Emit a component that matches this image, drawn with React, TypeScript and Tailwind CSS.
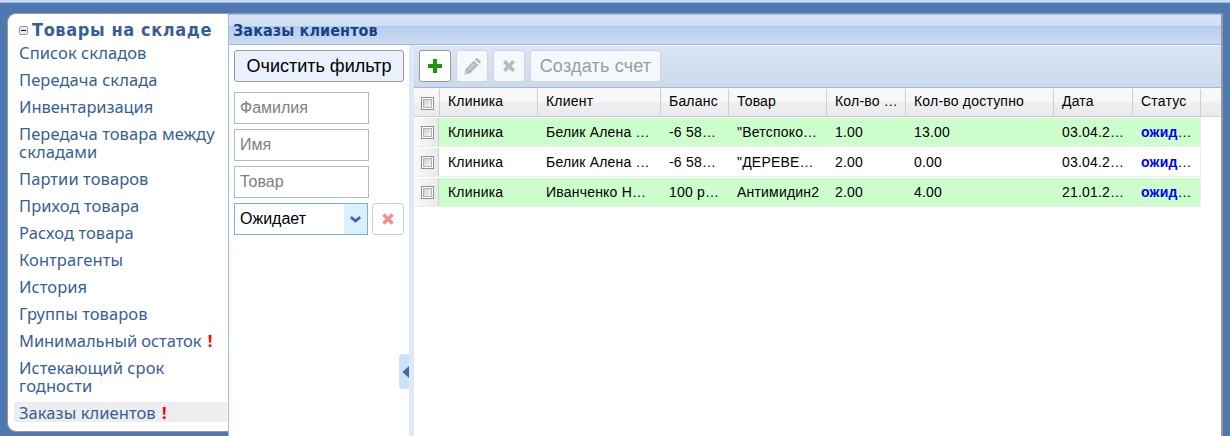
import React from 'react';

type MenuItem = { label: string; alert?: boolean; active?: boolean; tight?: boolean };

const menu: MenuItem[] = [
  { label: 'Список складов' },
  { label: 'Передача склада' },
  { label: 'Инвентаризация', tight: true },
  { label: 'Передача товара между\nскладами' },
  { label: 'Партии товаров' },
  { label: 'Приход товара' },
  { label: 'Расход товара' },
  { label: 'Контрагенты' },
  { label: 'История' },
  { label: 'Группы товаров' },
  { label: 'Минимальный остаток', alert: true, tight: true },
  { label: 'Истекающий срок\nгодности' },
  { label: 'Заказы клиентов', alert: true, active: true },
];

const columns = ['Клиника', 'Клиент', 'Баланс', 'Товар', 'Кол-во …', 'Кол-во доступно', 'Дата', 'Статус'];
const rows = [
  ['Клиника', 'Белик Алена …', '-6 58…', '"Ветспоко…', '1.00', '13.00', '03.04.2…', 'ожид'],
  ['Клиника', 'Белик Алена …', '-6 58…', '"ДЕРЕВЕ…', '2.00', '0.00', '03.04.2…', 'ожид'],
  ['Клиника', 'Иванченко Н…', '100 р…', 'Антимидин2', '2.00', '4.00', '21.01.2…', 'ожид'],
];

function Check() {
  return (
    <span className="block size-[13px] border border-[#8e8f8f] bg-white p-px">
      <span className="block size-[9px] border border-[#aeb3b9] bg-linear-to-br from-[#cbcfd5] to-[#f6f6f6]" />
    </span>
  );
}

function Sidebar() {
  return (
    <nav className="h-[419px] w-[221px] shrink-0 rounded-l-[9px] border border-r-0 border-[#999] bg-white pl-[6px] pt-[4px] font-['Noto_Sans',sans-serif] text-[#385f95]">
      <div className="flex h-[24px] items-center pl-[5px]">
        <svg width="9" height="9" viewBox="0 0 9 9" className="mr-[4px] shrink-0">
          <rect x=".5" y=".5" width="8" height="8" rx="1" fill="#e9edf2" stroke="#7f9db9" />
          <path d="M2 4.5h5" stroke="#111" />
        </svg>
        <span className="whitespace-nowrap font-['DejaVu_Sans_Condensed','DejaVu_Sans',sans-serif] text-[18px] font-bold leading-[22px] tracking-[0.6px] [font-stretch:condensed]">Товары на складе</span>
      </div>
      <ul>
        {menu.map((m) => (
          <li
            key={m.label}
            className={`mb-[7px] w-[213px] whitespace-pre pl-[5px] pt-[2px] text-[16.5px] leading-[18px] ${m.tight ? 'tracking-[-0.08px]' : 'tracking-[0.07px]'} ${m.active ? 'bg-[#ebedef]' : ''}`}
          >
            {m.label}
            {m.alert && <b className="ml-[2px] text-[#f00]"> !</b>}
          </li>
        ))}
      </ul>
    </nav>
  );
}

function Field({ placeholder }: { placeholder: string }) {
  return (
    <input
      placeholder={placeholder}
      className="mb-[5px] block h-8 w-[135px] border border-[#b5b8c8] bg-white px-[5px] text-[16px] outline-none placeholder:text-[#808080]"
    />
  );
}

function Filters() {
  return (
    <aside className="flex w-[180px] shrink-0">
      <div className="ml-[5px] w-[170px] shrink-0 pt-[5px]">
        <button className="mb-[10px] block h-8 w-[170px] whitespace-nowrap rounded-[3px] border border-[#999] bg-[#e8f1fd] text-[18px] text-black">
          Очистить фильтр
        </button>
        <Field placeholder="Фамилия" />
        <Field placeholder="Имя" />
        <Field placeholder="Товар" />
        <div className="flex">
          <div className="flex h-8 w-[134px] border border-[#7eadd9] bg-white">
            <span className="flex-1 pl-[5px] text-[16px] leading-[30px] text-black">Ожидает</span>
            <span className="flex w-[23px] items-center justify-center bg-[#d9f0ff]">
              <svg width="11" height="7" viewBox="0 0 11 7">
                <path d="M.8 1.2 5.5 5 10.2 1.2" fill="none" stroke="#4068a3" strokeWidth="2.8" />
              </svg>
            </span>
          </div>
          <button className="ml-1 flex h-8 w-8 items-center justify-center rounded-[3px] border border-[#d1d1d1] bg-white">
            <svg width="12" height="12" viewBox="0 0 12 12">
              <path d="m1.5 1.5 9 9m0-9-9 9" stroke="#f0918e" strokeWidth="3.6" />
            </svg>
          </button>
        </div>
      </div>
      <div className="relative w-0 shrink-0">
        <div className="absolute left-[-5px] top-[309px] flex h-[35px] w-[10px] items-center justify-end rounded-l-[4px] bg-[#cde1f9]">
          <svg width="7" height="12" viewBox="0 0 7 12"><path d="M7 0v12L.5 6z" fill="#4068a3" /></svg>
        </div>
      </div>
    </aside>
  );
}

function Toolbar() {
  return (
    <div className="flex h-[43px] border-b border-t border-b-[#99bbe8] border-t-[#eff4fb] bg-linear-to-b from-[#dbe6f4] to-[#cbdaec] pl-[5px] pt-[4px]">
      <button className="flex h-8 w-8 items-center justify-center rounded-[3px] border border-[#999] bg-white">
        <svg width="14" height="14" viewBox="0 0 14 14"><path d="M7 0v14M0 7h14" stroke="#1f9610" strokeWidth="4" /></svg>
      </button>
      <button className="ml-[5px] flex h-8 w-8 items-center justify-center rounded-[3px] border border-[#d1d5da] bg-[#f5f8fc]">
        <svg width="17" height="17" viewBox="0 0 17 17" fill="#b7babd">
          <path d="m.5 16.5 1-5.5L10 2.5 14.500 7 6 15.500z" />
          <path d="m11 1.500 1-1q1-.8 2 0l2.300 2.300q.8 1 0 2l-1 1z" />
          <path d="m4.800 11.800 6-6M2 15l1.500-1.500" stroke="#f5f8fc" strokeWidth=".8" />
        </svg>
      </button>
      <button className="ml-[5px] flex h-8 w-8 items-center justify-center rounded-[3px] border border-[#d1d5da] bg-[#f5f8fc]">
        <svg width="12" height="12" viewBox="0 0 12 12"><path d="m1.300 1.300 9.400 9.400m0-9.400-9.400 9.400" stroke="#b7babd" strokeWidth="3.6" /></svg>
      </button>
      <button className="ml-[5px] h-8 w-[131px] whitespace-nowrap rounded-[3px] border border-[#d1d5da] bg-[#f5f8fc] text-[18px] text-[#999da1]">
        Создать счет
      </button>
    </div>
  );
}

function Orders() {
  return (
    <section className="min-w-0 flex-1 bg-white text-[14px] tracking-[0.2px] text-black">
      <Toolbar />
      <div className="grid h-[29px] grid-cols-[26px_98px_123px_68px_98px_79px_148px_79px_68px] border-b border-[#d0d0d0] bg-[linear-gradient(#f9f9f9_0,#f7f7f8_50%,#f0f0f1_50%,#e9eaeb_100%)]">
        <div className="mt-px flex items-center border-r border-[#d0d0d0] pl-[7px] pt-[2px]"><Check /></div>
        {columns.map((c) => (
          <div key={c} className="mt-px whitespace-nowrap border-r border-[#d0d0d0] pl-[8px] leading-[24px]">{c}</div>
        ))}
      </div>
      {rows.map((r, i) => (
        <div key={i} className={`grid h-[30px] w-[787px] grid-cols-[25px_98px_123px_68px_98px_79px_148px_79px_68px] border-b border-r border-t border-b-[#ededed] border-r-[#ededed] border-t-white ${i % 2 === 0 ? 'bg-[#ccffcc]' : 'bg-white'}`}>
          <div className="flex items-center border-r border-[#d0d0d0] bg-linear-to-r from-[#fafafa] to-[#e8e9ea] pl-[7px]"><Check /></div>
          {r.map((v, j) => (
            <div key={j} className="whitespace-nowrap pl-[9px] leading-[28px]">
              {j === 7 ? <><b className="text-[#00f]">{v}</b>…</> : v}
            </div>
          ))}
        </div>
      ))}
    </section>
  );
}

export default function App() {
  return (
    <div className="flex h-[436px] w-[1230px] flex-col overflow-hidden bg-[#4e78b1] font-['Liberation_Sans',Arial,sans-serif]">
      <div className="h-[3px] shrink-0 border-b border-[#99bbe8] bg-[#c9d9ee]" />
      <div className="flex pl-[7px] pt-[10px]">
        <Sidebar />
        <main className="flex h-[423px] w-[995px] shrink-0 flex-col border-l border-r-2 border-t border-l-[#99bbe8] border-r-[#999] border-t-[#999] bg-white">
          <header className="h-[31px] shrink-0 whitespace-nowrap border-b border-t border-[#99bbe8] bg-[linear-gradient(#dbe6f5_0,#cfdef2_38%,#abc7ec_38%,#b9cfed_46%,#cbdaf0_100%)] pl-[4px] font-['DejaVu_Sans_Condensed','DejaVu_Sans',sans-serif] text-[16px] font-bold leading-[32px] tracking-[0.1px] text-[#15428b] [font-stretch:condensed]">
            Заказы клиентов
          </header>
          <div className="flex min-h-0 flex-1">
            <Filters />
            <div className="w-[5px] shrink-0 bg-[#dfe8f6]" />
            <Orders />
          </div>
        </main>
      </div>
    </div>
  );
}
